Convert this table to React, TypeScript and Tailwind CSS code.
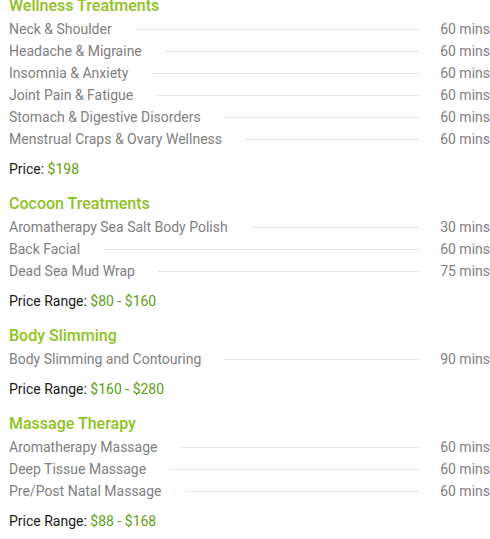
import React from 'react';

type Item = { name: string; time: string };
type Section = { title: string; label: string; price: string; items: Item[] };

const sections: Section[] = [
  {
    title: 'Wellness Treatments',
    label: 'Price',
    price: '$198',
    items: [
      { name: 'Neck & Shoulder', time: '60 mins' },
      { name: 'Headache & Migraine', time: '60 mins' },
      { name: 'Insomnia & Anxiety', time: '60 mins' },
      { name: 'Joint Pain & Fatigue', time: '60 mins' },
      { name: 'Stomach & Digestive Disorders', time: '60 mins' },
      { name: 'Menstrual Craps & Ovary Wellness', time: '60 mins' },
    ],
  },
  {
    title: 'Cocoon Treatments',
    label: 'Price Range',
    price: '$80 - $160',
    items: [
      { name: 'Aromatherapy Sea Salt Body Polish', time: '30 mins' },
      { name: 'Back Facial', time: '60 mins' },
      { name: 'Dead Sea Mud Wrap', time: '75 mins' },
    ],
  },
  {
    title: 'Body Slimming',
    label: 'Price Range',
    price: '$160 - $280',
    items: [{ name: 'Body Slimming and Contouring', time: '90 mins' }],
  },
  {
    title: 'Massage Therapy',
    label: 'Price Range',
    price: '$88 - $168',
    items: [
      { name: 'Aromatherapy Massage', time: '60 mins' },
      { name: 'Deep Tissue Massage', time: '60 mins' },
      { name: 'Pre/Post Natal Massage', time: '60 mins' },
    ],
  },
];

export default function App() {
  return (
    <div className="w-[490px] h-[539px] overflow-hidden bg-white font-['Roboto',sans-serif]">
      <div className="mt-[-6px] pl-[9px]">
        {sections.map((s) => (
          <div key={s.title} className="mb-[12px]">
            <h3 className="text-[16px] leading-6 font-medium text-[#8dc21f]">{s.title}</h3>
            <ul>
              {s.items.map((it) => (
                <li key={it.name} className="flex items-center text-[14px] leading-[22px] text-[#808080]">
                  <span>{it.name}</span>
                  <span className="flex-1 ml-[23px] mr-[20px] h-px bg-[#e6e6e6]"></span>
                  <span>{it.time}</span>
                </li>
              ))}
            </ul>
            <p className="mt-2 text-[14px] leading-[22px] text-[#1a1a1a]">
              {s.label}: <span className="text-[#5f9e16]">{s.price}</span>
            </p>
          </div>
        ))}
      </div>
    </div>
  );
}
